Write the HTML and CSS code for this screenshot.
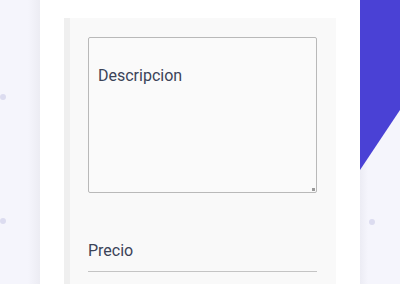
FILE: index.html
```html
<!DOCTYPE html>
<html lang="es">
<head>
<meta charset="utf-8">
<link rel="stylesheet" href="styles.css">
</head>
<body>
<div class="page">
  <div class="gutter gutter-left">
    <span class="dot dot-a"></span>
    <span class="dot dot-b"></span>
  </div>
  <main class="panel">
    <form class="card">
      <div class="textarea">
        <span class="placeholder">Descripcion</span>
        <span class="grip"></span>
      </div>
      <div class="field">
        <span class="label">Precio</span>
      </div>
    </form>
  </main>
  <div class="gutter gutter-right">
    <div class="wedge"></div>
    <span class="dot dot-c"></span>
  </div>
</div>
</body>
</html>
```

FILE: styles.css
```css
* { box-sizing: border-box; }
html, body { margin: 0; padding: 0; }
body {
  width: 400px;
  height: 284px;
  overflow: hidden;
  background: #f5f5fc;
  font-family: Roboto, "Liberation Sans", sans-serif;
}
.page {
  display: flex;
  height: 284px;
}
.gutter {
  width: 40px;
  flex: none;
  position: relative;
}
.gutter-left {
  background: linear-gradient(to right, #f5f5fc 0, #f5f5fc 28px, #ececf3 40px);
}
.gutter-right {
  width: 40px;
  background: linear-gradient(to right, #ececf4 0, #f5f5fc 8px);
}
.wedge {
  height: 170px;
  background: #4a41d5;
  clip-path: polygon(0 0, 100% 0, 100% 110px, 0 170px);
}
.dot {
  position: absolute;
  border-radius: 50%;
  background: #dcdcf0;
}
.dot-a { left: 0; top: 94px; width: 6px; height: 6px; }
.dot-b { left: 0; top: 218px; width: 6px; height: 6px; }
.dot-c { left: 9px; top: 219px; width: 6px; height: 6px; }
.panel {
  width: 320px;
  flex: none;
  background: #ffffff;
  padding: 18px 24px 0 24px;
}
.card {
  height: 266px;
  background: #f9f9f9;
  border-left: 6px solid #efefef;
  padding: 19px 19px 0 18px;
}
.textarea {
  position: relative;
  height: 156px;
  border: 1px solid #b9b9b9;
  border-radius: 2px;
  background: #fafafa;
  padding: 26px 0 0 9px;
}
.placeholder {
  font-size: 16px;
  line-height: 24px;
  color: #3b4358;
}
.grip {
  position: absolute;
  right: 1px;
  bottom: 1px;
  width: 3px;
  height: 3px;
  background: #9a9a9a;
}
.field {
  margin-top: 46px;
  height: 33px;
  border-bottom: 1px solid #c4c4c4;
  padding-top: 2px;
}
.label {
  font-size: 16px;
  line-height: 20px;
  color: #3b4358;
}
```
